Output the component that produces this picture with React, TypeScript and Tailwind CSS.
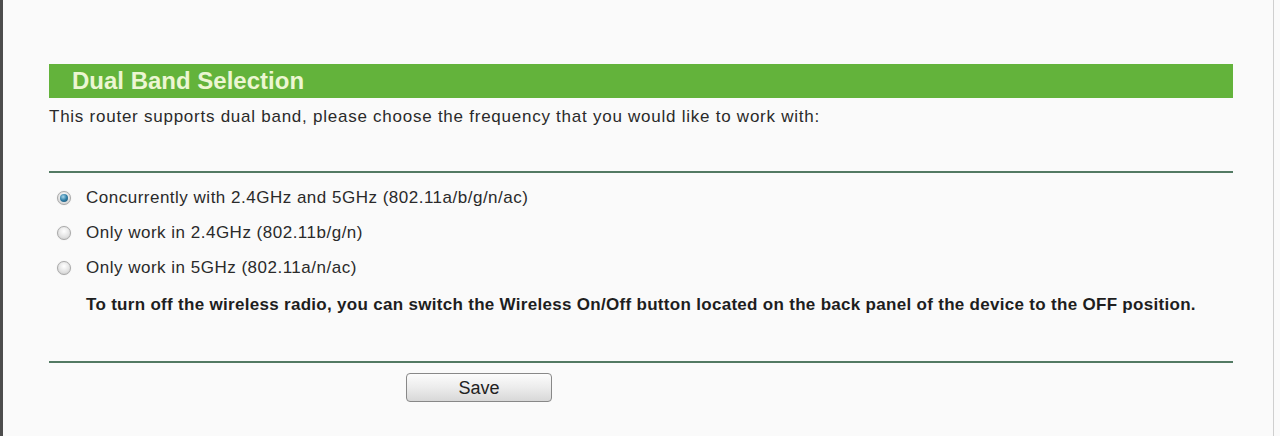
import React, { useState } from "react";

type BandOption = {
  id: string;
  label: string;
};

const options: BandOption[] = [
  { id: "both", label: "Concurrently with 2.4GHz and 5GHz (802.11a/b/g/n/ac)" },
  { id: "24", label: "Only work in 2.4GHz (802.11b/g/n)" },
  { id: "5", label: "Only work in 5GHz (802.11a/n/ac)" },
];

function Radio({ checked, onClick }: { checked: boolean; onClick: () => void }) {
  return (
    <span
      onClick={onClick}
      className="w-[14px] h-[14px] rounded-full border border-[#a8a8a8] bg-[radial-gradient(circle_at_50%_35%,#ffffff_0%,#e4e4e4_55%,#c8c8c8_100%)] shadow-[0_0_1px_#d0d0d0] flex items-center justify-center cursor-pointer shrink-0"
    >
      {checked && (
        <span className="w-[8px] h-[8px] rounded-full bg-[radial-gradient(circle_at_40%_35%,#a8d6ea_0%,#2f7ea6_50%,#1b4a68_100%)]" />
      )}
    </span>
  );
}

function App() {
  const [band, setBand] = useState("both");

  return (
    <div className="w-[1280px] h-[436px] bg-[#fafafa] overflow-hidden font-['Liberation_Sans',Arial,sans-serif] text-[#222]">
      <div className="w-[1274px] h-full border-l-[3px] border-l-[#4d4d4d] border-r border-r-[#cfcfcf] pl-[46px]">
        <div className="w-[1184px] flex flex-col">
          <div className="mt-[64px] h-[34px] bg-[#63b33b] flex items-center pl-[23px]">
            <span className="text-[24px] leading-none font-bold text-[#ecf6d2]">
              Dual Band Selection
            </span>
          </div>

          <p className="mt-[9px] h-[20px] leading-[20px] text-[17px] tracking-[0.75px] text-[#2a2a2a]">
            This router supports dual band, please choose the frequency that you would like to work with:
          </p>

          <div className="mt-[44px] h-[2px] bg-[#537a63]" />

          <div className="mt-[7px] flex flex-col">
            {options.map((o) => (
              <div key={o.id} className="h-[35px] flex items-center pl-[8px] gap-[15px]">
                <Radio checked={band === o.id} onClick={() => setBand(o.id)} />
                <span
                  className="text-[17px] leading-[20px] tracking-[0.5px] text-[#2a2a2a] cursor-pointer"
                  onClick={() => setBand(o.id)}
                >
                  {o.label}
                </span>
              </div>
            ))}
          </div>

          <p className="mt-[10px] pl-[37px] h-[20px] leading-[20px] text-[17px] font-bold tracking-[0.3px] text-[#1e1e1e]">
            To turn off the wireless radio, you can switch the Wireless On/Off button located on the back panel of the device to the OFF position.
          </p>

          <div className="mt-[46px] h-[2px] bg-[#537a63]" />

          <div className="mt-[10px] pl-[357px]">
            <button className="w-[146px] h-[29px] rounded-[4px] border border-[#888] bg-[linear-gradient(#fcfcfc,#ececec_50%,#d8d8d8)] text-[18px] text-[#222] leading-none">
              Save
            </button>
          </div>
        </div>
      </div>
    </div>
  );
}

export default App;
